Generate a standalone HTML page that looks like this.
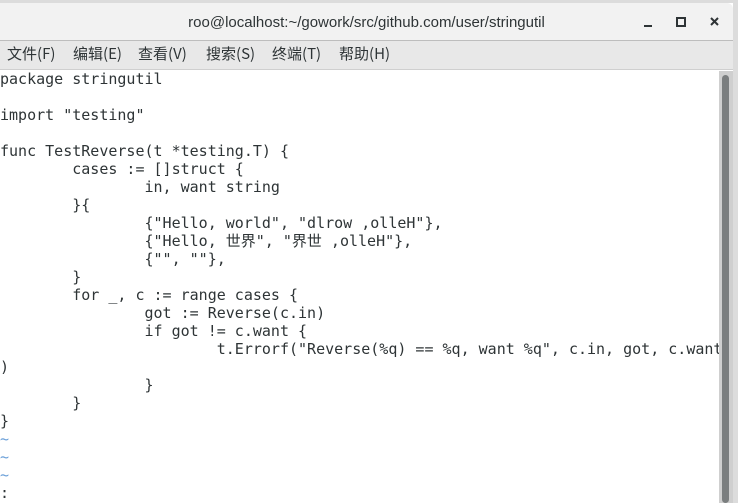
<!DOCTYPE html>
<html><head><meta charset="utf-8"><style>
body{margin:0;width:738px;height:503px;overflow:hidden;background:#dcdcdc;position:relative;font-family:"Liberation Sans","Noto Sans CJK SC",sans-serif}
#win{position:absolute;left:0;top:3px;width:733px;height:500px;background:#fff}
#title{position:absolute;left:0;top:0;width:733px;height:37px;background:#f2f2f2;border-bottom:1px solid #bdbdbd;border-top-right-radius:6px}
#title .t{position:absolute;left:0;width:733px;top:11px;text-align:center;font-size:15px;color:#2e3436}
#menu{position:absolute;left:0;top:38px;width:733px;height:28px;background:#e8e8e8;border-bottom:1px solid #cfcfcf;font-size:15px;color:#2e3436;font-family:"Noto Sans CJK SC",sans-serif}
#menu span{position:absolute;top:2px}
#term{position:absolute;left:0;top:67px;font-family:"DejaVu Sans Mono","Liberation Mono","Noto Sans CJK SC",monospace;font-size:15px;line-height:18px;color:#2e3436;white-space:pre;margin:0}
.tl{color:#6a9fd8}
#sb{position:absolute;left:719px;top:68px;width:14px;height:432px;background:#cfcfcf}
#th{position:absolute;left:722px;top:72px;width:7px;height:428px;background:#7b7e7f;border-radius:4px}
</style></head><body>
<div id="win">
<div id="title"><div class="t">roo@localhost:~/gowork/src/github.com/user/stringutil</div>
<svg style="position:absolute;left:640px;top:12px" width="90" height="16"><rect x="4" y="10" width="8" height="2" fill="#2e3436"/><rect x="37" y="3" width="8" height="8" fill="none" stroke="#2e3436" stroke-width="2"/><path d="M71 3l7 7M78 3l-7 7" stroke="#2e3436" stroke-width="2"/></svg></div>
<div id="menu"><span style="left:7px">文件(F)</span><span style="left:73px">编辑(E)</span><span style="left:138px">查看(V)</span><span style="left:206px">搜索(S)</span><span style="left:272px">终端(T)</span><span style="left:339px">帮助(H)</span></div>
<pre id="term">package stringutil

import "testing"

func TestReverse(t *testing.T) {
        cases := []struct {
                in, want string
        }{
                {"Hello, world", "dlrow ,olleH"},
                {"Hello, 世界", "界世 ,olleH"},
                {"", ""},
        }
        for _, c := range cases {
                got := Reverse(c.in)
                if got != c.want {
                        t.Errorf("Reverse(%q) == %q, want %q", c.in, got, c.want
)
                }
        }
}
<span class="tl">~</span>
<span class="tl">~</span>
<span class="tl">~</span>
:</pre>
<div id="sb"></div><div id="th"></div>
</div>
</body></html>
